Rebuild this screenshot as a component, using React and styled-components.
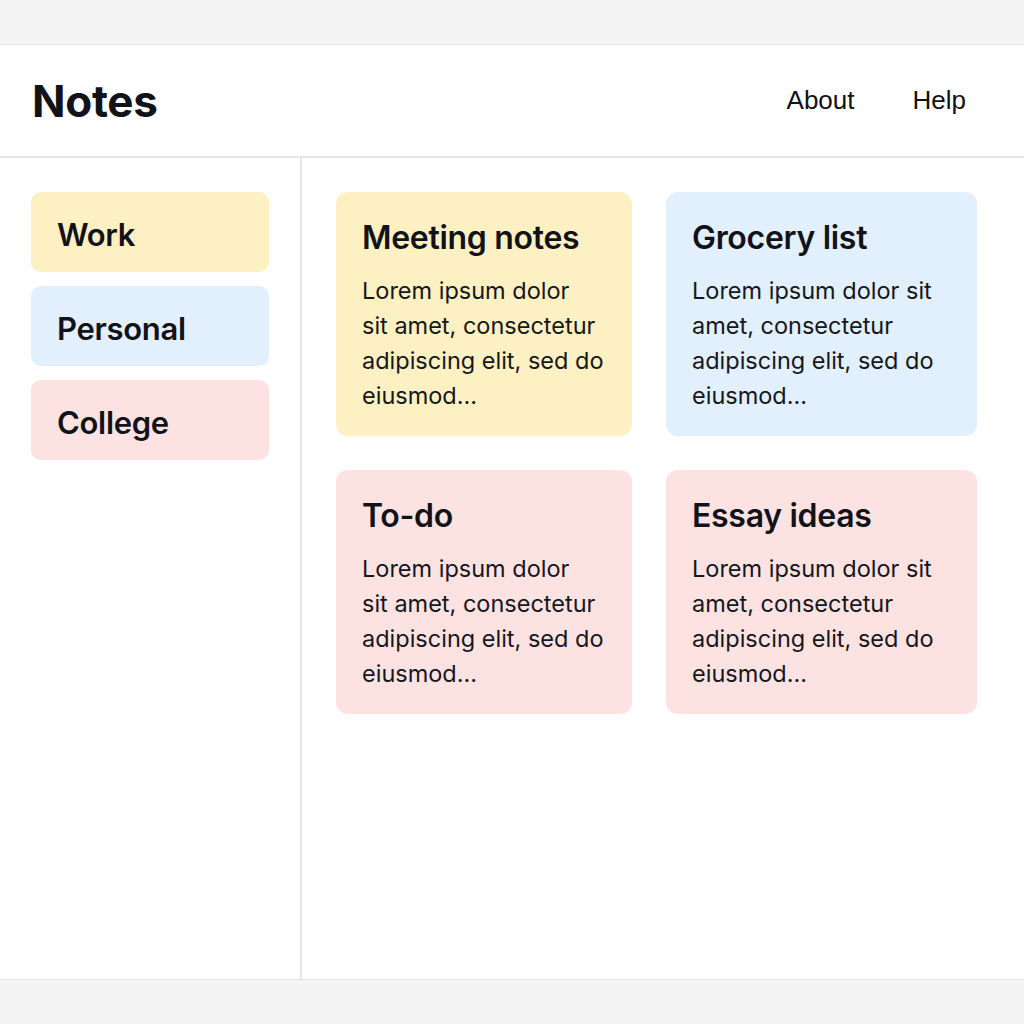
import React from 'react';
import styled, { createGlobalStyle } from 'styled-components';

const GlobalStyle = createGlobalStyle`
  html, body {
    margin: 0;
    padding: 0;
    background: #f4f4f4;
    font-family: Inter, "Noto Sans", sans-serif;
    color: #111318;
  }
`;

const Page = styled.div`
  padding: 44px 0;
  height: 1024px;
  box-sizing: border-box;
  display: flex;
  flex-direction: column;
`;

const Frame = styled.div`
  flex: 1;
  background: #fff;
  border-top: 1px solid #e4e4e4;
  border-bottom: 1px solid #e4e4e4;
  display: flex;
  flex-direction: column;
`;

const Header = styled.header`
  height: 111px;
  display: flex;
  align-items: center;
  justify-content: space-between;
  padding: 0 58px 0 32px;
  border-bottom: 2px solid #e6e6e6;
`;

const Logo = styled.h1`
  margin: 0;
  font-size: 44px;
  font-weight: 700;
  letter-spacing: -0.3px;
`;

const Nav = styled.nav`
  display: flex;
  gap: 58px;
`;

const NavLink = styled.a`
  font-family: "Liberation Sans", Arial, sans-serif;
  font-size: 26px;
  color: #111;
  text-decoration: none;
`;

const Body = styled.div`
  flex: 1;
  display: flex;
`;

const Sidebar = styled.aside`
  width: 302px;
  border-right: 2px solid #e6e6e6;
  padding: 34px 31px;
  box-sizing: border-box;
  display: flex;
  flex-direction: column;
  gap: 14px;
`;

const Category = styled.div`
  height: 80px;
  border-radius: 10px;
  background: ${p => p.$bg};
  display: flex;
  align-items: center;
  padding: 4px 0 0 26px;
  box-sizing: border-box;
  font-size: 31px;
  font-weight: 600;
  letter-spacing: -0.3px;
`;

const Grid = styled.main`
  padding: 34px;
  display: grid;
  grid-template-columns: 296px 311px;
  grid-auto-rows: 244px;
  gap: 34px;
  align-content: start;
`;

const Card = styled.article`
  background: ${p => p.$bg};
  border-radius: 12px;
  padding: 25px 20px 22px 26px;
  box-sizing: border-box;
`;

const CardTitle = styled.h2`
  margin: 0 0 14px;
  font-size: 32px;
  font-weight: 600;
  letter-spacing: -0.3px;
  line-height: 42px;
`;

const CardText = styled.p`
  margin: 0;
  font-size: 23.5px;
  line-height: 35px;
  color: #15171c;
`;

const YELLOW = '#fdf0c2';
const BLUE = '#e2effd';
const PINK = '#fde2e2';

const categories = [
  { name: 'Work', bg: YELLOW },
  { name: 'Personal', bg: BLUE },
  { name: 'College', bg: PINK },
];

// narrow column breaks after "dolor", wide one after "sit"
const narrow = ['Lorem ipsum dolor', 'sit amet, consectetur', 'adipiscing elit, sed do', 'eiusmod...'];
const wide = ['Lorem ipsum dolor sit', 'amet, consectetur', 'adipiscing elit, sed do', 'eiusmod...'];

const notes = [
  { title: 'Meeting notes', bg: YELLOW, lines: narrow },
  { title: 'Grocery list', bg: BLUE, lines: wide },
  { title: 'To-do', bg: PINK, lines: narrow },
  { title: 'Essay ideas', bg: PINK, lines: wide },
];

export default function App() {
  return (
    <Page>
      <GlobalStyle />
      <Frame>
        <Header>
          <Logo>Notes</Logo>
          <Nav>
            <NavLink href="#">About</NavLink>
            <NavLink href="#">Help</NavLink>
          </Nav>
        </Header>
        <Body>
          <Sidebar>
            {categories.map(c => (
              <Category key={c.name} $bg={c.bg}>{c.name}</Category>
            ))}
          </Sidebar>
          <Grid>
            {notes.map(n => (
              <Card key={n.title} $bg={n.bg}>
                <CardTitle>{n.title}</CardTitle>
                <CardText>
                  {n.lines.map((l, i) => (
                    <React.Fragment key={i}>
                      {l}
                      {i < n.lines.length - 1 && <br />}
                    </React.Fragment>
                  ))}
                </CardText>
              </Card>
            ))}
          </Grid>
        </Body>
      </Frame>
    </Page>
  );
}
